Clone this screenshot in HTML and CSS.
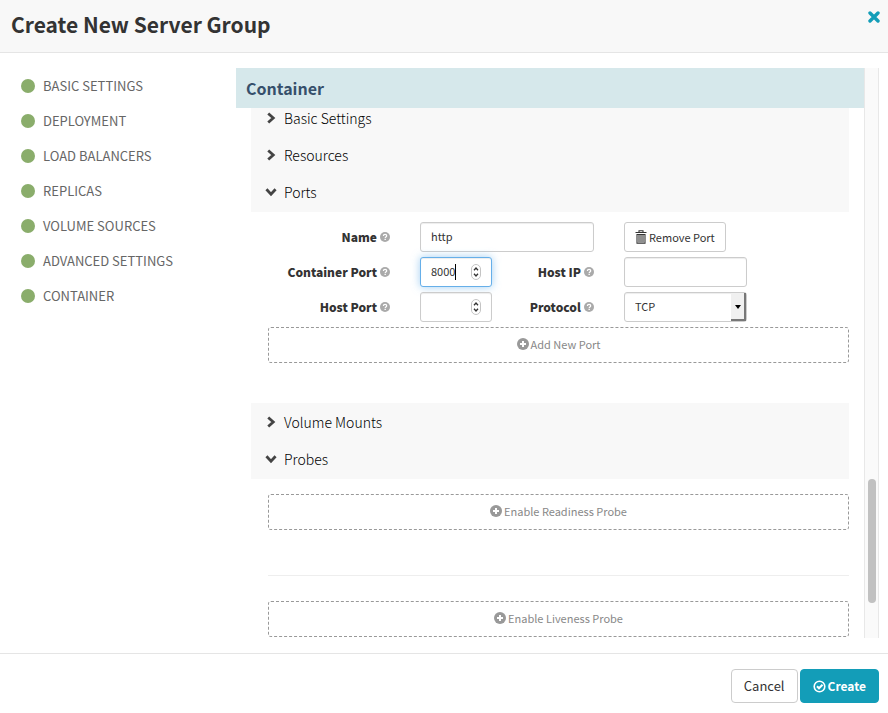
FILE: index.html
```html
<!DOCTYPE html>
<html lang="en">

<head>
    <meta charset="UTF-8">
    <title>Create New Server Group</title>
    <link rel="stylesheet" href="styles.css">
</head>

<body>
    <!-- shared icons -->
    <svg class="sprite" aria-hidden="true">
        <symbol id="help" viewBox="0 0 16 16">
            <circle cx="8" cy="8" r="8" />
            <path d="M5.4 6.3C5.5 4.4 6.6 3.6 8.1 3.6c1.500 0 2.600.9 2.600 2.300 0 1.900-2.400 1.900-2.400 3.500" fill="none" stroke="#fff" stroke-width="2" />
            <path d="M7.200 10.700h2.200v2H7.200z" fill="#fff" />
        </symbol>
        <symbol id="plus" viewBox="0 0 12 12">
            <circle cx="6" cy="6" r="6" />
            <path d="M5 3h2v2h2v2H7v2H5V7H3V5h2z" fill="#fff" />
        </symbol>
        <symbol id="chevron" viewBox="0 0 10 10">
            <path d="M2.700 1.200 6.900 5 2.700 8.800" fill="none" stroke="#444" stroke-width="2.300" />
        </symbol>
        <symbol id="spin" viewBox="0 0 10 16">
            <rect x=".5" y=".5" width="9" height="15" rx="4.500" fill="#fff" stroke="#c4c4c4" />
            <path d="M3 6.200 5 4l2 2.200M3 9.800 5 12l2-2.200" fill="none" stroke="#333" stroke-width="1.300" />
        </symbol>
    </svg>

    <div class="modal">
        <header class="modal-header">
            <h1>Create New Server Group</h1>
            <button type="button" class="close" aria-label="Close">
                <svg width="12" height="12" viewBox="0 0 12 12"><path d="M2 2l8 8M10 2l-8 8" stroke="#139db8" stroke-width="3.400" stroke-linecap="round" /></svg>
            </button>
        </header>

        <div class="modal-body">
            <nav class="steps">
                <ul>
                    <li><a href="#">Basic Settings</a></li>
                    <li><a href="#">Deployment</a></li>
                    <li><a href="#">Load Balancers</a></li>
                    <li><a href="#">Replicas</a></li>
                    <li><a href="#">Volume Sources</a></li>
                    <li><a href="#">Advanced Settings</a></li>
                    <li><a href="#">Container</a></li>
                </ul>
            </nav>

            <main class="page">
                <h2 class="page-title">Container</h2>
                <div class="page-content">
                    <div class="sections sections-first">
                        <button type="button" class="section"><svg class="chevron"><use href="#chevron" /></svg>Basic Settings</button>
                        <button type="button" class="section"><svg class="chevron"><use href="#chevron" /></svg>Resources</button>
                        <button type="button" class="section open"><svg class="chevron"><use href="#chevron" /></svg>Ports</button>
                    </div>

                    <form class="ports">
                        <div class="row">
                            <label for="name">Name <svg class="help"><use href="#help" /></svg></label>
                            <input type="text" id="name" class="field" value="http">
                            <div>
                                <button type="button" class="btn btn-small">
                                    <svg class="trash" viewBox="0 0 12 14"><path d="M4 2V.7h4V2M.5 2.500h11M2 4.500h8v8.800H2zM4 5v7.500M6 5v7.500M8 5v7.500" fill="none" stroke="#333" stroke-width="1.100" /></svg>Remove Port
                                </button>
                            </div>
                        </div>
                        <div class="row">
                            <label for="container-port">Container Port <svg class="help"><use href="#help" /></svg></label>
                            <div class="pair">
                                <div class="number">
                                    <input type="number" id="container-port" class="field focused" value="8000">
                                    <span class="caret"></span>
                                    <svg class="spin"><use href="#spin" /></svg>
                                </div>
                                <label for="host-ip">Host IP <svg class="help"><use href="#help" /></svg></label>
                            </div>
                            <input type="text" id="host-ip" class="field">
                        </div>
                        <div class="row">
                            <label for="host-port">Host Port <svg class="help"><use href="#help" /></svg></label>
                            <div class="pair">
                                <div class="number">
                                    <input type="number" id="host-port" class="field">
                                    <svg class="spin"><use href="#spin" /></svg>
                                </div>
                                <label for="protocol">Protocol <svg class="help"><use href="#help" /></svg></label>
                            </div>
                            <div class="select">
                                <select id="protocol" class="field">
                                    <option>TCP</option>
                                    <option>UDP</option>
                                </select>
                                <span class="arrow"></span>
                            </div>
                        </div>
                        <button type="button" class="add-new"><svg class="plus"><use href="#plus" /></svg>Add New Port</button>
                    </form>

                    <div class="sections">
                        <button type="button" class="section"><svg class="chevron"><use href="#chevron" /></svg>Volume Mounts</button>
                        <button type="button" class="section open"><svg class="chevron"><use href="#chevron" /></svg>Probes</button>
                    </div>

                    <div class="probes">
                        <button type="button" class="add-new"><svg class="plus"><use href="#plus" /></svg>Enable Readiness Probe</button>
                        <hr>
                        <button type="button" class="add-new"><svg class="plus"><use href="#plus" /></svg>Enable Liveness Probe</button>
                    </div>
                </div>
            </main>
            <div class="scrollbar"><div class="thumb"></div></div>
        </div>

        <footer class="modal-footer">
            <button type="button" class="btn">Cancel</button>
            <button type="submit" class="btn btn-primary">
                <svg width="13" height="13" viewBox="0 0 13 13" fill="none" stroke="#fff" stroke-width="1.600"><circle cx="6.500" cy="6.500" r="5.300" /><path d="M4 6.300l2 2 3.500-3.500" stroke-width="2" /></svg>Create
            </button>
        </footer>
    </div>
</body>

</html>
```
FILE: styles.css
```css
* {
    box-sizing: border-box;
}

body,
h1,
h2,
ul {
    margin: 0;
    padding: 0;
    list-style: none;
}

body,
button,
input,
select {
    font-family: "Noto Sans CJK SC", "Noto Sans", sans-serif;
    font-size: 11px;
    line-height: 18px;
    color: #333;
}

button {
    cursor: pointer;
}

svg {
    flex: none;
}

.sprite {
    display: none;
}

.modal {
    display: flex;
    flex-direction: column;
    height: 100vh;
    background: #fff;
}

/* header */
.modal-header {
    display: flex;
    justify-content: space-between;
    align-items: flex-start;
    padding: 11px 8px 15px 11px;
    background: #f8f8f8;
    border-bottom: 1px solid #e5e5e5;
}

.modal-header h1 {
    font-size: 21px;
    line-height: 26px;
    font-weight: bold;
}

.close {
    display: flex;
    padding: 0;
    border: 0;
    background: none;
}

/* body */
.modal-body {
    display: flex;
    flex: 1;
    min-height: 0;
    padding: 15px 9px 15px 21px;
}

.steps {
    width: 215px;
}

.steps a {
    display: flex;
    align-items: center;
    gap: 8px;
    height: 35px;
    font-size: 13px;
    color: #666;
    text-transform: uppercase;
    text-decoration: none;
}

.steps a::before {
    content: "";
    width: 14px;
    height: 14px;
    border-radius: 50%;
    background: #8aad6b;
}

.page {
    flex: 1;
    overflow: hidden;
}

.page-title {
    position: relative;
    padding: 5px 10px;
    font-size: 16px;
    line-height: 30px;
    color: #36506b;
    background: #d6e8eb;
}

.page-content {
    padding: 0 15px;
}

.sections {
    padding: 1px 0;
    background: #f8f8f8;
}

/* scrolled a little under the title */
.sections-first {
    margin-top: -9px;
}

.section {
    display: flex;
    align-items: center;
    gap: 7px;
    width: 100%;
    height: 37px;
    padding: 0 14px 1px;
    border: 0;
    background: none;
    font-size: 14px;
    font-weight: 300;
    color: #000;
}

.chevron {
    width: 12px;
    height: 12px;
}

.open .chevron {
    transform: rotate(90deg);
}

/* ports form */
.ports {
    padding: 10px 0 40px 17px;
}

.row {
    display: grid;
    grid-template-columns: 122fr 174fr 123fr 72fr;
    gap: 30px;
    height: 30px;
    margin-bottom: 5px;
}

.row label {
    display: flex;
    align-items: center;
    justify-content: flex-end;
    gap: 3px;
    font-size: 12px;
    font-weight: 900;
    white-space: nowrap;
}

.help {
    width: 10px;
    height: 10px;
    fill: #aaa;
}

.pair {
    display: flex;
    justify-content: space-between;
}

.number,
.select {
    position: relative;
}

.number {
    width: 72px;
}

.field {
    width: 100%;
    height: 30px;
    padding: 4px 10px 6px;
    border: 1px solid #ccc;
    border-radius: 3px;
    background: #fff;
    box-shadow: inset 0 1px 1px rgba(0, 0, 0, .075);
    appearance: none;
    outline: 0;
}

.field[type=number] {
    appearance: textfield;
}

.focused {
    border-color: #66afe9;
    box-shadow: inset 0 1px 1px rgba(0, 0, 0, .075), 0 0 8px rgba(102, 175, 233, .6);
}

.caret {
    position: absolute;
    top: 7px;
    left: 35px;
    width: 1px;
    height: 16px;
    background: #000;
}

.spin {
    position: absolute;
    top: 7px;
    right: 11px;
    width: 10px;
    height: 16px;
}

.arrow {
    position: absolute;
    top: 1px;
    right: 1px;
    width: 15px;
    height: 28px;
    border-right: 2px solid #777;
    border-bottom: 2px solid #777;
    background: #f0f0f0;
    pointer-events: none;
}

.arrow::after {
    content: "";
    position: absolute;
    top: 12px;
    left: 4px;
    border: 3px solid transparent;
    border-top: 4px solid #000;
    border-bottom: 0;
}

.add-new {
    display: flex;
    align-items: center;
    justify-content: center;
    gap: 2px;
    width: 100%;
    height: 36px;
    padding: 0 6px 2px;
    border: 1px dashed #999;
    border-radius: 3px;
    background: #fff;
    color: #888;
}

.plus {
    width: 12px;
    height: 12px;
    fill: #999;
}

.probes {
    padding: 15px 0 0 17px;
}

.probes hr {
    margin: 45px 0 25px;
    border: 0;
    border-top: 1px solid #eee;
}

/* scrollbar */
.scrollbar {
    display: flex;
    flex-direction: column;
    justify-content: flex-end;
    width: 15px;
    padding: 0 2px 35px 3px;
    border: solid #e8e8e8;
    border-width: 0 1px;
    background: #fafafa;
}

.thumb {
    height: 22%;
    min-height: 124px;
    border-radius: 4px;
    background: #c1c1c1;
}

/* footer */
.modal-footer {
    display: flex;
    justify-content: flex-end;
    gap: 2px;
    padding: 15px 9px 10px;
    border-top: 1px solid #e5e5e5;
}

.btn {
    display: flex;
    align-items: center;
    gap: 2px;
    height: 34px;
    padding: 0 12px;
    border: 1px solid #ccc;
    border-radius: 4px;
    background: #fff;
    font-size: 13px;
}

.btn-small {
    height: 30px;
    padding: 0 10px 1px;
    border-radius: 3px;
    font-size: 11px;
}

.trash {
    width: 12px;
    height: 14px;
}

.btn-primary {
    border-color: #139db8;
    background: #139db8;
    color: #fff;
    font-size: 12px;
    font-weight: bold;
}
```
